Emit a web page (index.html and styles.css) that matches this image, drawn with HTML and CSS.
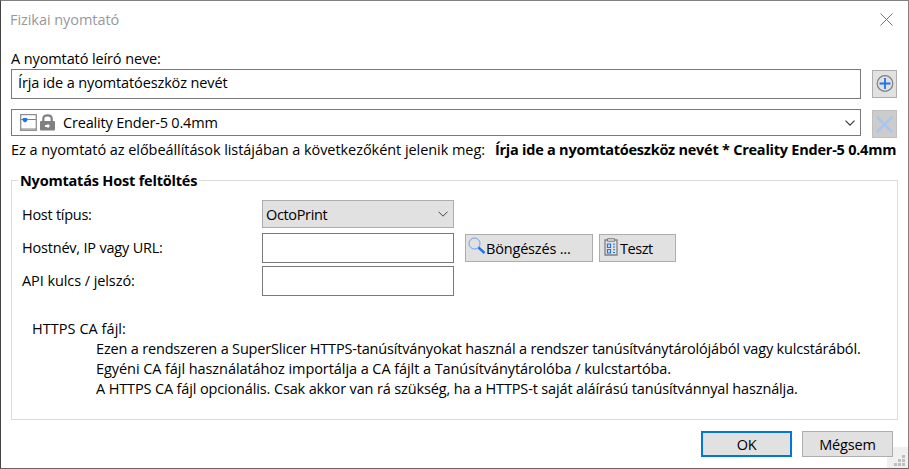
FILE: index.html
```html
<!DOCTYPE html>
<html lang="hu">
<head>
<meta charset="utf-8">
<title>Fizikai nyomtató</title>
<link rel="stylesheet" href="styles.css">
</head>
<body>
<main class="dialog">
  <header class="titlebar">
    <span class="t-title">Fizikai nyomtató</span>
    <svg class="close" width="13" height="13" viewBox="0 0 13 13"><path d="M.5 .5l12 12M12.500 .5l-12 12" stroke="#777" fill="none"/></svg>
  </header>
  <div class="name-label"><span class="t-name">A nyomtató leíró neve:</span></div>
  <div class="row row-name">
    <div class="field"><span class="t-value">Írja ide a nyomtatóeszköz nevét</span></div>
    <div class="tool"><svg width="18" height="18" viewBox="0 0 18 18" fill="none"><circle cx="9" cy="8.500" r="7.8" stroke="#808080" stroke-width="1.2"/><path d="M9 3v11M3.500 8.500h11" stroke="#2172eb" stroke-width="1.8"/></svg></div>
  </div>
  <div class="row row-preset">
    <div class="field combo">
      <svg width="17" height="17" viewBox="0 0 17 17"><path d="M.7.7h15.600v15.600H.7z" fill="none" stroke="#909090" stroke-width="1.300"/><path d="M1 5.500h15M1 15h15" stroke="#808080"/><path d="M2.800 4h4.400v3L5 8.500 2.800 7z" fill="#2172eb"/></svg>
      <svg class="lock" width="15" height="17" viewBox="0 0 15 17"><path d="M3.300 8V4.500Q3.300 1.300 7.500 1.300t4.200 3.200V8" fill="none" stroke="#808080" stroke-width="2.200"/><rect y="7" width="15" height="9.500" rx="1" fill="#808080"/><path d="M5 11h2l1-1 2 2-2 2-1-1H5z" fill="#fff"/></svg>
      <span class="t-preset">Creality Ender-5 0.4mm</span>
      <svg class="chev" width="10" height="6" viewBox="0 0 10 6"><path d="M.5.7L5 5.200 9.500.7" fill="none" stroke="#333" stroke-width="1.100"/></svg>
    </div>
    <div class="tool off"><svg width="17" height="17" viewBox="0 0 17 17"><path d="M.7 .7l15.600 15.600M16.300 .7L.7 16.300" fill="none" stroke="#a6c6f7" stroke-width="2.500"/></svg></div>
  </div>
  <div class="info"><span class="t-info">Ez a nyomtató az előbeállítások listájában a következőként jelenik meg:</span><b class="t-full">Írja ide a nyomtatóeszköz nevét * Creality Ender-5 0.4mm</b></div>

  <section class="group">
    <h2 class="legend"><span class="t-legend">Nyomtatás Host feltöltés</span></h2>
    <div class="form">
      <span class="t-type">Host típus:</span>
      <div class="select"><span class="t-octo">OctoPrint</span><svg class="chev" width="10" height="6" viewBox="0 0 10 6"><path d="M.5.7L5 5.200 9.500.7" fill="none" stroke="#444"/></svg></div>
      <span></span>
      <span class="t-host">Hostnév, IP vagy URL:</span>
      <div class="text"></div>
      <div class="actions">
        <div class="btn browse"><svg width="18" height="18" viewBox="0 0 18 18" fill="none"><circle cx="6.500" cy="6.500" r="5.500" stroke="#6a9cea" stroke-width="1"/><path d="M10.500 10.500l6 5.500" stroke="#2172eb" stroke-width="2.400"/></svg><span class="t-browse">Böngészés ...</span></div>
        <div class="btn test"><svg width="14" height="18" viewBox="0 0 14 18" fill="none"><path d="M1 2h12v15H1z" stroke="#808080" stroke-width="1.300"/><path d="M3.500.7h7v2.600h-7z" fill="#ddd" stroke="#808080"/><path d="M3.500 6h3v3.500h-3zM3.500 11.500h3V15h-3z" stroke="#2172eb" stroke-width="1.200"/><path d="M9 6.200h2M9 9h2M9 11.700h2M9 14.500h2" stroke="#2172eb"/></svg><span class="t-test">Teszt</span></div>
      </div>
      <span class="t-api">API kulcs / jelszó:</span>
      <div class="text"></div>
    </div>
    <div class="ca">
      <div><span class="t-ca">HTTPS CA fájl:</span></div>
      <p><span class="t-p1">Ezen a rendszeren a SuperSlicer HTTPS-tanúsítványokat használ a rendszer tanúsítványtárolójából vagy kulcstárából.</span></p>
      <p><span class="t-p2">Egyéni CA fájl használatához importálja a CA fájlt a Tanúsítványtárolóba / kulcstartóba.</span></p>
      <p><span class="t-p3">A HTTPS CA fájl opcionális. Csak akkor van rá szükség, ha a HTTPS-t saját aláírású tanúsítvánnyal használja.</span></p>
    </div>
  </section>
  <footer class="footer">
    <div class="btn ok"><span>OK</span></div>
    <div class="btn cancel"><span class="t-cancel">Mégsem</span></div>
    <svg class="grip" width="21" height="21" viewBox="0 0 21 21"><path fill="#f0f0f0" d="M0 0h21v21H0z"/><path fill="#bfbfbf" d="M15 8h3v3h-3zM11 12h3v3h-3zM15 12h3v3h-3zM7 16h3v3H7zM11 16h3v3h-3zM15 16h3v3h-3z"/></svg>
  </footer>
</main>
</body>
</html>
```
FILE: styles.css
```css
* { box-sizing: border-box; }
body { margin: 0; background: #fff; font: 14.5px/20px "Open Sans", "Noto Sans", sans-serif; color: #000; letter-spacing: -0.45px; white-space: nowrap; }
.dialog { position: relative; width: 909px; height: 469px; border: 1px solid #808080; border-left-color: #444; border-bottom-color: #666; overflow: hidden; }
svg { flex: none; display: block; }
.titlebar { height: 48px; padding: 9px 15px 0 9px; display: flex; justify-content: space-between; color: #999; }
.close { margin-top: 3px; }
.name-label { height: 20px; padding-left: 10px; }
.row { display: flex; padding-left: 10px; gap: 11px; }
.row-name { height: 40px; }
.field { width: 850px; height: 30px; border: 1px solid #7a7a7a; padding: 3px 6px; }
.tool { width: 25px; height: 28px; margin-top: 1px; background: #e1e1e1; border: 1px solid #adadad; display: grid; place-items: center; }
.off { background: #ccc; border-color: #bfbfbf; }
.row-preset { height: 30px; }
.combo { height: 27px; padding: 0 5px 0 8px; display: flex; align-items: center; }
.lock { margin: 0 8px 0 3px; }
.chev { margin-left: auto; }
.info { padding-left: 10px; height: 33px; padding-top: 1px; display: flex; gap: 10px; }
.group { width: 887px; height: 240px; margin-left: 10px; border: 1px solid #dcdcdc; margin-top: 8px; }
.legend { width: max-content; margin: -10px 0 0 6px; padding: 0 2px; background: #fff; font-size: inherit; line-height: 20px; height: 20px; }
.form { margin: 9px 0 0 10px; display: grid; grid-template-columns: 240px 192px 1fr; grid-template-rows: 29px 30px 30px; row-gap: 3.5px; align-items: center; }
.select { height: 28px; align-self: start; background: #e1e1e1; border: 1px solid #adadad; display: flex; align-items: center; padding: 0 5px 0 3px; }
.select span, .btn span { padding-top: 2px; }
.text { height: 30px; border: 1px solid #7a7a7a; }
.actions { display: flex; gap: 6px; margin-left: 11px; }
.btn { background: #e1e1e1; border: 1px solid #adadad; display: flex; align-items: center; height: 28px; }
.browse { width: 128px; padding-left: 2px; }
.test { width: 77px; padding-left: 4px; gap: 2px; }
.browse svg { margin-top: -3px; }
.test svg { margin-top: -1px; }
.ca { margin: 23px 0 0 20px; }
.ca p { margin: 0 0 0 64px; }
.footer { display: flex; gap: 10px; padding: 11px 0 0 700px; }
.footer .btn { position: relative; z-index: 1; width: 91px; height: 26px; justify-content: center; }
.footer .ok { border: 2px solid #0078d7; }
.grip { position: absolute; right: 0; bottom: 0; }
.t-title { letter-spacing: -0.06px; }
.t-name { letter-spacing: -0.11px; }
.t-value { letter-spacing: -0.13px; }
.t-preset { letter-spacing: -0.18px; }
.t-info { letter-spacing: -0.06px; }
.t-full { letter-spacing: -0.24px; }
.t-legend { letter-spacing: -0.2px; }
.t-type { letter-spacing: -0.27px; }
.t-host { letter-spacing: -0.2px; }
.t-api { letter-spacing: -0.08px; }
.t-octo { letter-spacing: -0.35px; }
.t-browse { letter-spacing: -0.18px; }
.t-ca { letter-spacing: 0.05px; }
.t-p1 { letter-spacing: -0.18px; }
.t-p2 { letter-spacing: -0.07px; }
.t-p3 { letter-spacing: -0.14px; }
.t-cancel { letter-spacing: -0.15px; }
```
